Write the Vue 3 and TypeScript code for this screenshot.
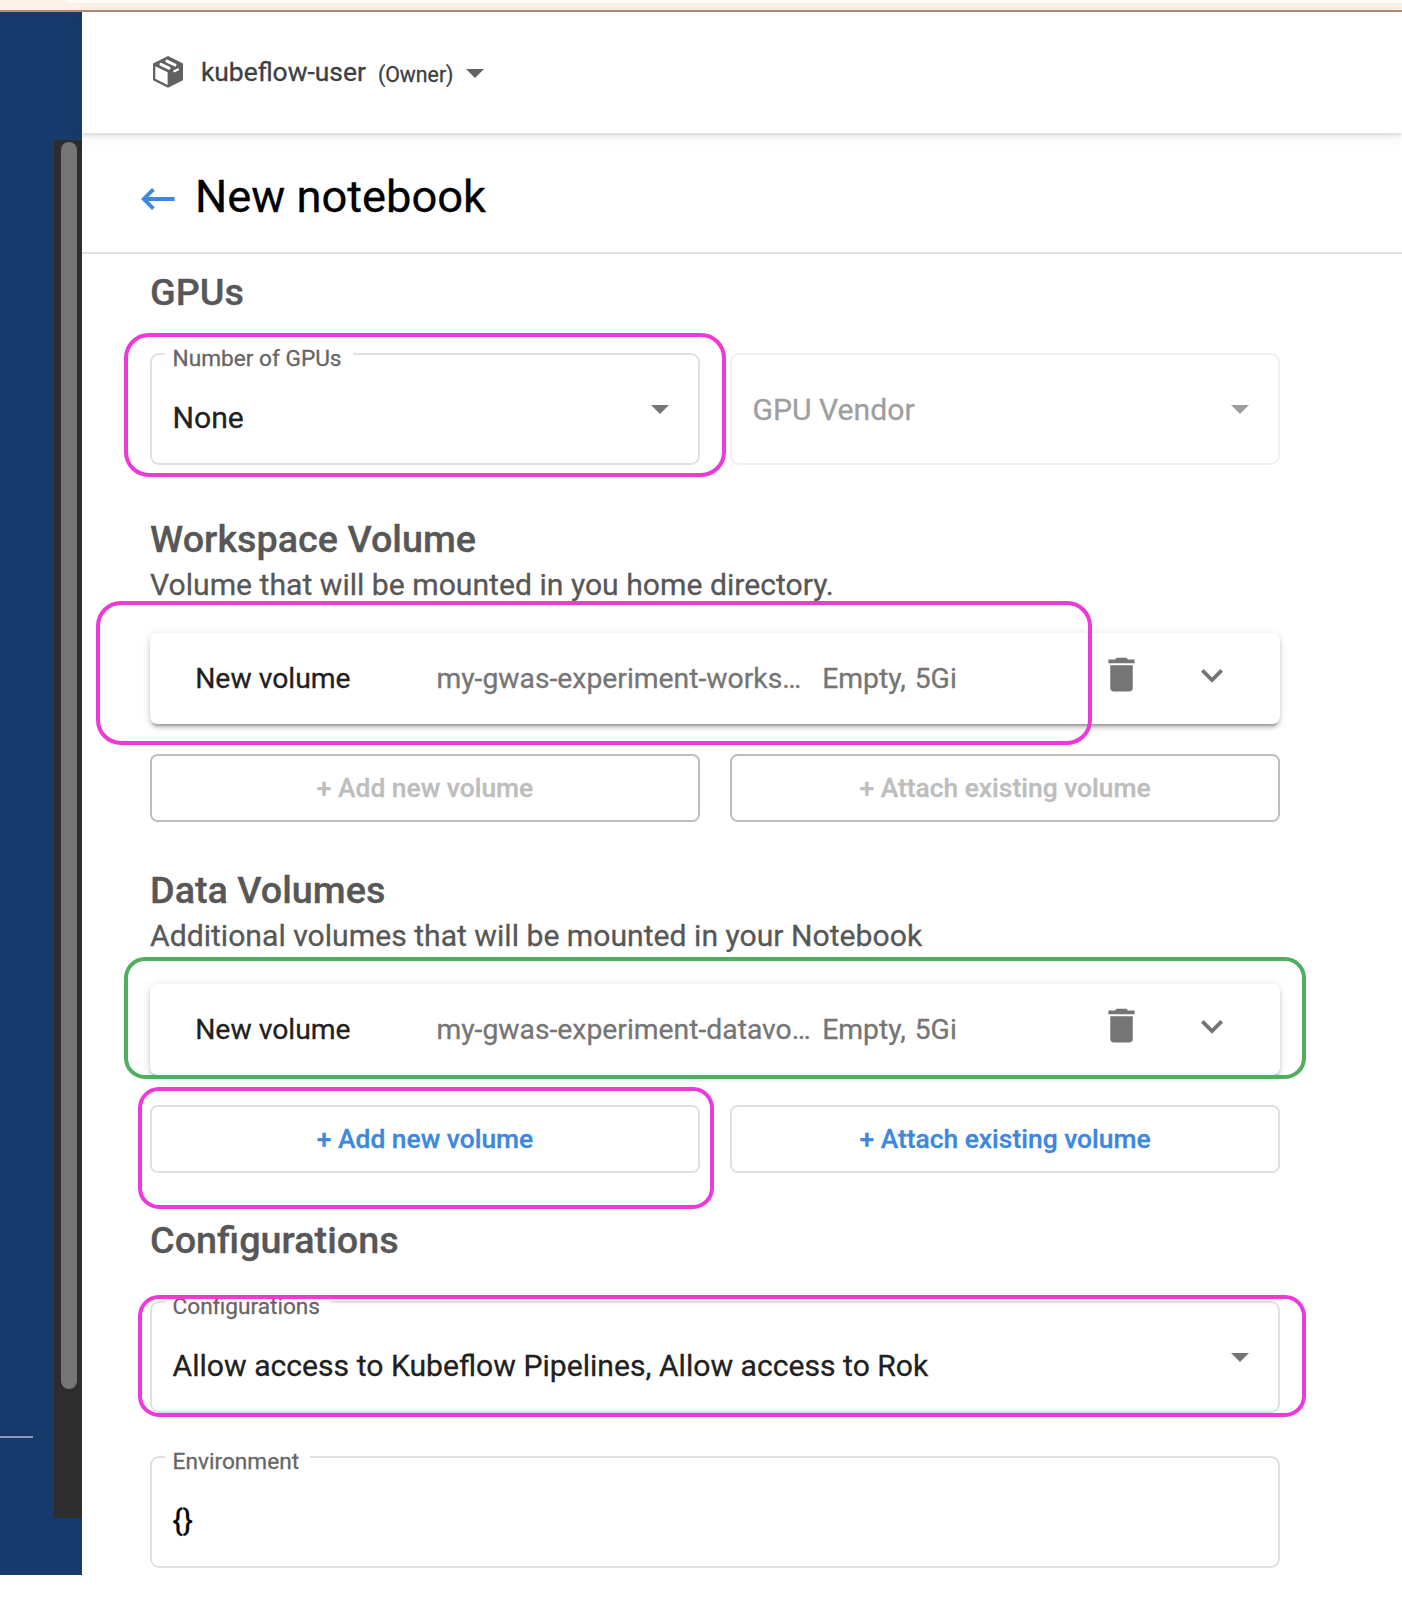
<script setup lang="ts">
interface Volume {
  title: string
  description: string
  enabled: boolean
  name: string
  summary: string
}

interface Highlight {
  x: number
  y: number
  width: number
  height: number
  radius: number
  color: string
}

const volumes: Volume[] = [
  {
    title: 'Workspace Volume',
    description: 'Volume that will be mounted in you home directory.',
    enabled: false,
    name: 'my-gwas-experiment-works…',
    summary: 'Empty, 5Gi',
  },
  {
    title: 'Data Volumes',
    description: 'Additional volumes that will be mounted in your Notebook',
    enabled: true,
    name: 'my-gwas-experiment-datavo…',
    summary: 'Empty, 5Gi',
  },
]

const pink = '#ec39d8'
const green = '#4fae5f'

const highlights: Highlight[] = [
  { x: 124, y: 333, width: 602, height: 144, radius: 25, color: pink },
  { x: 96, y: 601, width: 996, height: 144, radius: 25, color: pink },
  { x: 124, y: 957, width: 1182, height: 122, radius: 21, color: green },
  { x: 138, y: 1087, width: 576, height: 122, radius: 21, color: pink },
  { x: 138, y: 1295, width: 1168, height: 122, radius: 21, color: pink },
]
</script>

<template>
  <div class="page">
    <div class="browser-edge"><div class="tab-edge"></div></div>
    <div class="shell">
      <aside class="sidebar">
        <div class="divider"></div>
        <div class="track"><div class="thumb"></div></div>
      </aside>
      <main class="main">
        <header class="topbar">
          <svg class="cube" width="30" height="32" viewBox="0 0 30 32">
            <path d="M15 0L30 7.6V24.2L15 31.8L0 24.2V7.6Z" fill="#5f6163" />
            <path d="M2.3 10.2L14.6 16.3V29L2.3 22.8Z" fill="#fff" />
            <path d="M7.9 8.3L16 12.2M13.9 5.1L22 9" stroke="#fff" stroke-width="3" stroke-linecap="round" />
            <path d="M21.3 15.2L25 13.5" stroke="#fff" stroke-width="2.2" stroke-linecap="round" />
          </svg>
          <span class="namespace">kubeflow-user</span>
          <span class="role">(Owner)</span>
          <span class="caret header-caret"></span>
        </header>

        <div class="titlebar">
          <svg class="back" width="34" height="22" viewBox="0 0 34 22" fill="none" stroke="#3c87e0" stroke-width="3.8">
            <path d="M12.4 1.3L2.7 11L12.4 20.7M2.7 11H33.6" />
          </svg>
          <h1>New notebook</h1>
        </div>

        <div class="form">
          <h2 class="gpus">GPUs</h2>
          <div class="row">
            <div class="field">
              <span class="label">Number of GPUs</span>
              <span class="value">None</span>
              <span class="caret"></span>
            </div>
            <div class="field disabled">
              <span class="value placeholder">GPU Vendor</span>
              <span class="caret"></span>
            </div>
          </div>

          <section v-for="volume in volumes" :key="volume.title" class="volume">
            <h2>{{ volume.title }}</h2>
            <p>{{ volume.description }}</p>
            <div class="card">
              <span class="kind">New volume</span>
              <span class="name">{{ volume.name }}</span>
              <span class="summary">{{ volume.summary }}</span>
              <svg class="trash" width="45" height="45" viewBox="0 0 24 24">
                <path fill="#757575" d="M19 4H15.5L14.5 3H9.5L8.5 4H5V6H19ZM6 19A2 2 0 0 0 8 21H16A2 2 0 0 0 18 19V7H6Z" />
              </svg>
              <svg class="chevron" width="22" height="14" viewBox="0 0 22 14" fill="none" stroke="#757575" stroke-width="3.8">
                <path d="M1.35 1.35L11 11L20.65 1.35" />
              </svg>
            </div>
            <div class="row">
              <button type="button" :disabled="!volume.enabled">+ Add new volume</button>
              <button type="button" :disabled="!volume.enabled">+ Attach existing volume</button>
            </div>
          </section>

          <h2 class="configurations">Configurations</h2>
          <div class="field">
            <span class="label">Configurations</span>
            <span class="value">Allow access to Kubeflow Pipelines, Allow access to Rok</span>
            <span class="caret"></span>
          </div>
          <div class="field environment">
            <span class="label">Environment</span>
            <span class="value braces">{}</span>
          </div>
        </div>
      </main>
    </div>

    <div
      v-for="(box, index) in highlights"
      :key="index"
      class="highlight"
      :style="{
        left: box.x + 'px',
        top: box.y + 'px',
        width: box.width + 'px',
        height: box.height + 'px',
        borderRadius: box.radius + 'px',
        borderColor: box.color,
      }"
    ></div>
  </div>
</template>

<style>
body {
  margin: 0;
  background: #fff;
}
</style>

<style scoped>
.page {
  position: relative;
  width: 1402px;
  height: 1612px;
  overflow: hidden;
  background: #fff;
  font-family: Roboto, sans-serif;
  -webkit-text-stroke-width: 0.3px;
}
.page * {
  box-sizing: border-box;
}
.browser-edge {
  height: 12px;
  background: #fcf1e6;
  border-bottom: 2px solid #b78d7f;
}
.tab-edge {
  height: 3px;
  margin-left: 66px;
  background: #fefaf7;
  border-bottom-left-radius: 6px;
}
.shell {
  display: flex;
  height: 1563px;
}
.sidebar {
  display: flex;
  justify-content: space-between;
  width: 82px;
  background: #173a6c;
}
.divider {
  width: 33px;
  height: 2px;
  margin-top: 1424px;
  background: #8a9bb8;
}
.track {
  width: 28px;
  height: 1378px;
  margin-top: 128px;
  padding: 2px 5px 0 7px;
  background: #2d2d2d;
}
.thumb {
  height: 1247px;
  border-radius: 8px;
  background: #757575;
}
.main {
  flex: 1;
}
.topbar {
  display: flex;
  align-items: center;
  height: 121px;
  padding-left: 71px;
  background: #fff;
  box-shadow: 0 1px 5px rgba(60, 64, 67, 0.22), 0 4px 12px rgba(60, 64, 67, 0.08);
  color: #3c4043;
}
.cube {
  margin: -1px 17.9px 0 0;
}
.namespace {
  margin-top: -1px;
  font-size: 26.4px;
  line-height: 32px;
}
.role {
  margin: 4px 12.3px 0 12px;
  font-size: 21.3px;
  line-height: 26px;
}
.caret {
  width: 0;
  height: 0;
  border: 9.4px solid transparent;
  border-top-color: #757575;
  border-bottom: 0;
}
.header-caret {
  margin-top: 1px;
  border-top-color: #5f6368;
}
.titlebar {
  display: flex;
  align-items: center;
  height: 121px;
  padding: 8px 0 0 59px;
  border-bottom: 2px solid #e0e0e0;
}
.back {
  margin: 5px 20px 0 0;
}
h1 {
  margin: 1px 0 0;
  color: #000;
  font-size: 45.25px;
  font-weight: 400;
  line-height: 54px;
}
.form {
  width: 1130px;
  margin-left: 68px;
}
h2 {
  margin: 0;
  color: #575757;
  font-size: 37.75px;
  font-weight: 500;
  line-height: 40px;
}
.gpus {
  padding: 18px 0 41px;
}
.row {
  display: grid;
  grid-template-columns: 1fr 1fr;
  gap: 30px;
}
.field {
  position: relative;
  display: flex;
  align-items: center;
  justify-content: space-between;
  height: 112px;
  padding: 0 29px 0 20.5px;
  border: 2px solid #e0e0e0;
  border-radius: 9px;
}
.label {
  position: absolute;
  top: -9.5px;
  left: 13px;
  padding: 0 11px 0 7.6px;
  background: #fff;
  color: #666;
  font-size: 22.65px;
  line-height: 26px;
}
.value {
  padding-top: 18px;
  color: #212121;
  font-size: 30.15px;
  line-height: 36px;
}
.disabled {
  border-color: #f0f0f0;
}
.placeholder {
  padding-top: 1px;
  color: #9e9e9e;
}
.disabled .caret {
  border-top-color: #9e9e9e;
}
.volume {
  padding-top: 54px;
}
.volume + .volume {
  padding-top: 48px;
}
p {
  margin: 6px 0 28px;
  color: #575757;
  font-size: 30.15px;
  line-height: 40px;
}
.card {
  display: flex;
  align-items: center;
  height: 91px;
  margin-bottom: 30px;
  padding-left: 45.2px;
  border-radius: 7.5px;
  background: #fff;
  box-shadow: 0 5.6px 1.9px -3.8px rgba(0, 0, 0, 0.2), 0 3.8px 3.8px rgba(0, 0, 0, 0.14), 0 1.9px 9.4px rgba(0, 0, 0, 0.12);
  color: #757575;
  font-size: 28.3px;
  line-height: 34px;
  white-space: nowrap;
}
.kind {
  width: 241.2px;
  color: #212121;
}
.name {
  width: 385.8px;
}
.summary {
  width: 277px;
  word-spacing: 2px;
}
.trash {
  margin: -9px 57px 0 0;
}
.chevron {
  margin-top: -6px;
}
button {
  height: 68px;
  padding: 0;
  border: 2px solid #e0e0e0;
  border-radius: 7.5px;
  background: #fff;
  color: #3c87e0;
  font-family: inherit;
  font-size: 26.4px;
  font-weight: 500;
}
button:disabled {
  border-color: #bdbdbd;
  color: #bdbdbd;
}
.configurations {
  padding: 47px 0 41px;
}
.environment {
  margin-top: 43px;
}
.braces {
  padding-top: 17px;
  color: #000;
}
.highlight {
  position: absolute;
  border: 4px solid;
}
</style>
